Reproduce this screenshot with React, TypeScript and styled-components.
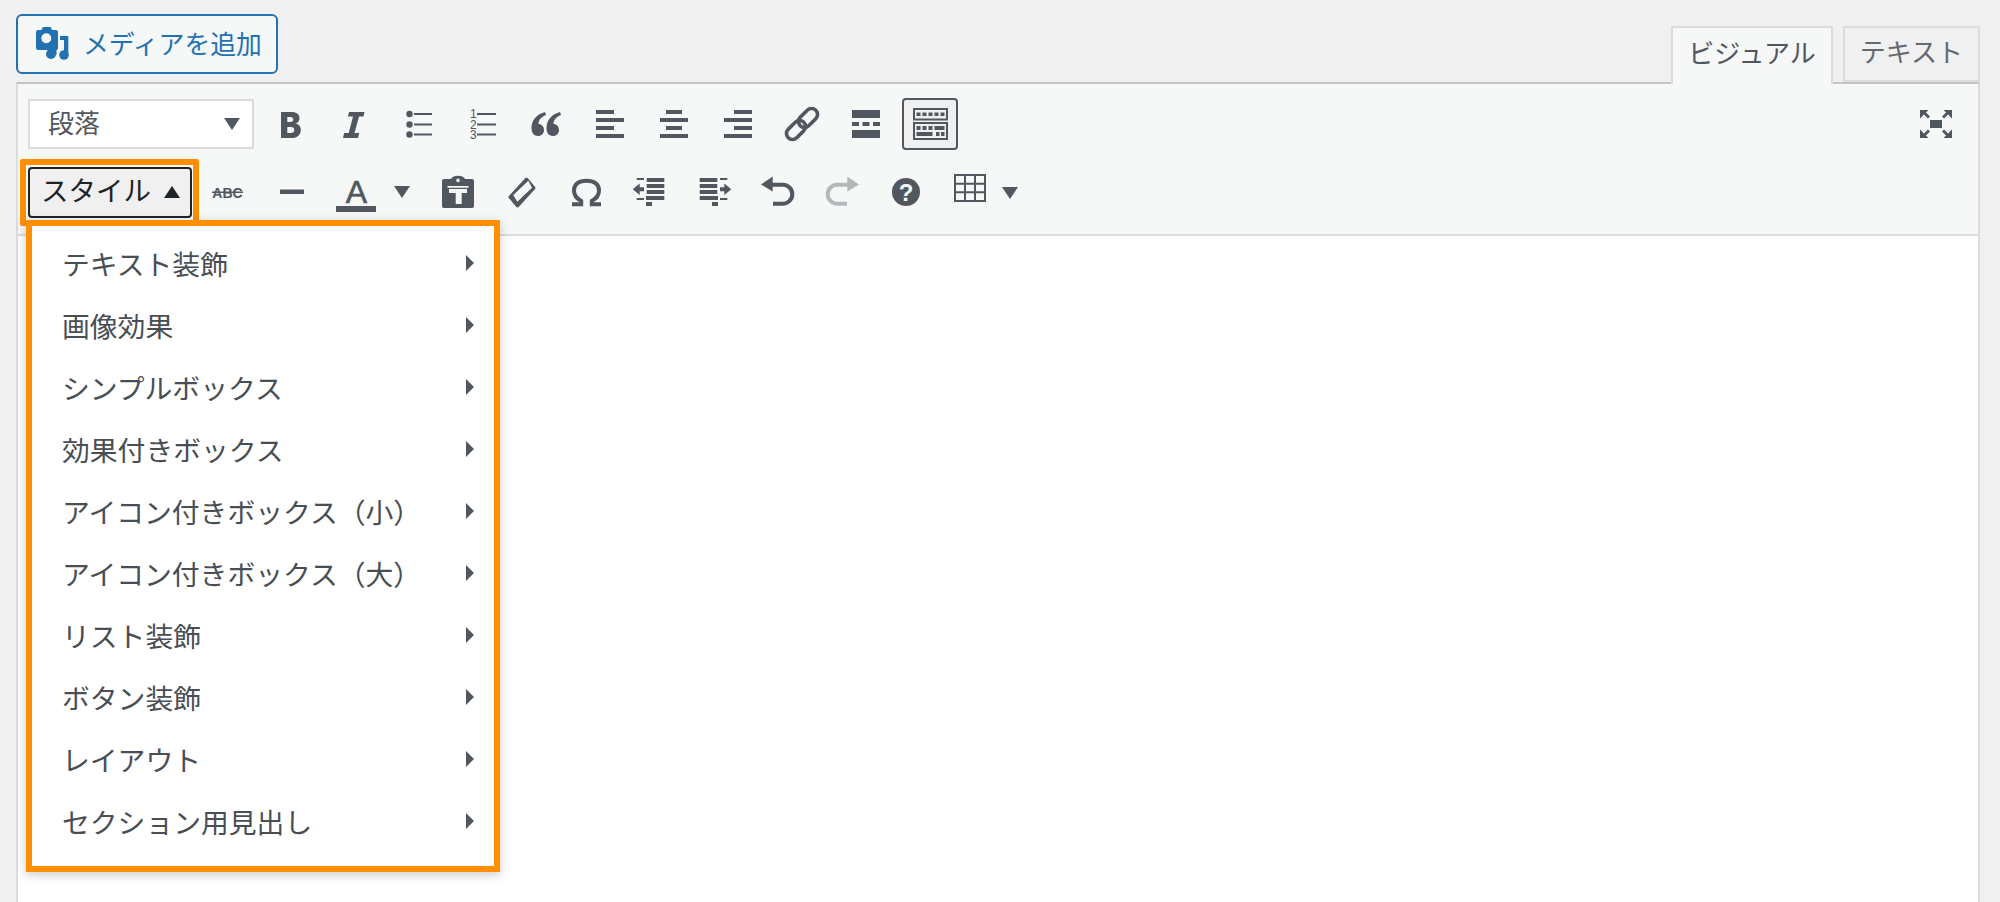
import React from 'react';
import styled, { createGlobalStyle } from 'styled-components';

const Global = createGlobalStyle`
  html, body { margin: 0; padding: 0; height: 100%; overflow: hidden; background: #f0f0f1; }
  #root { height: 100%; }
  * { box-sizing: border-box; }
`;

const FONT = `"Noto Sans CJK JP", "Noto Sans", sans-serif`;

const Page = styled.div`
  height: 902px;
  padding: 14px 20px 0 16px;
  display: flex;
  flex-direction: column;
  font-family: ${FONT};
  color: #50575e;
  overflow: hidden;
`;

const Header = styled.div`
  display: flex;
  justify-content: space-between;
  height: 68px;
  flex-shrink: 0;
`;

const MediaButton = styled.button`
  width: 262px;
  height: 60px;
  padding: 0 0 2px 18px;
  display: flex;
  align-items: center;
  gap: 15px;
  background: #f6f7f7;
  border: 2px solid #2271b1;
  border-radius: 6px;
  color: #2271b1;
  font: 400 25.8px/1 ${FONT};
`;

const Tabs = styled.div`
  display: flex;
  align-items: flex-start;
  gap: 10px;
  margin-top: 12px;
`;

const Tab = styled.div<{ $active?: boolean }>`
  height: ${(p) => (p.$active ? '58px' : '56px')};
  padding: 0 15px ${(p) => (p.$active ? '9px' : '7px')};
  display: flex;
  align-items: center;
  position: relative;
  z-index: 1;
  border: 2px solid #dcdcde;
  border-bottom: ${(p) => (p.$active ? 'none' : '2px solid #dcdcde')};
  background: ${(p) => (p.$active ? '#f6f7f7' : '#f0f0f1')};
  color: ${(p) => (p.$active ? '#50575e' : '#646970')};
  font-size: 26px;
  line-height: 1;
`;

const Editor = styled.div`
  flex: 1;
  position: relative;
  display: flex;
  flex-direction: column;
  border: 2px solid #dcdcde;
  border-top-color: #c3c4c7;
  border-bottom: none;
  background: #fff;
`;

const Toolbar = styled.div`
  height: 152px;
  flex-shrink: 0;
  padding: 14px 10px 0;
  display: flex;
  flex-direction: column;
  gap: 16px;
  background: #f6f7f7;
  border-bottom: 2px solid #dcdcde;
`;

const Row = styled.div`
  height: 52px;
  display: flex;
  align-items: center;
`;

const Select = styled.div`
  width: 226px;
  height: 50px;
  margin-right: 4px;
  padding: 0 12px 6px 18px;
  display: flex;
  align-items: center;
  justify-content: space-between;
  background: #fff;
  border: 2px solid #dcdcde;
  font-size: 26px;
  color: #50575e;
`;

const Caret = styled.span<{ $up?: boolean; $color?: string; $nudge?: number }>`
  width: 0;
  height: 0;
  flex-shrink: 0;
  border-left: 8px solid transparent;
  border-right: 8px solid transparent;
  margin-top: ${(p) => p.$nudge ?? 0}px;
  ${(p) => (p.$up ? 'border-bottom' : 'border-top')}: 12px solid ${(p) => p.$color ?? '#50575e'};
`;

const ToolButton = styled.div<{ $active?: boolean }>`
  width: 56px;
  height: 52px;
  margin: 0 4px;
  flex-shrink: 0;
  display: flex;
  align-items: center;
  justify-content: center;
  border: 2px solid ${(p) => (p.$active ? '#50575e' : 'transparent')};
  border-radius: 4px;
  background: ${(p) => (p.$active ? '#f0f0f1' : 'transparent')};
`;

const SplitArrow = styled.div`
  width: 39px;
  height: 52px;
  padding-right: 9px;
  display: flex;
  align-items: center;
  justify-content: center;
  flex-shrink: 0;
`;

const TableArrow = styled.div`
  width: 16px;
  height: 52px;
  padding-top: 2px;
  display: flex;
  align-items: center;
  justify-content: center;
  flex-shrink: 0;
`;

const Spacer = styled.div`
  flex: 1;
`;

const StyleFrame = styled.div`
  width: 179px;
  height: 67px;
  margin: 0 -4px 0 -8px;
  padding: 2px 1px 2px 2px;
  flex-shrink: 0;
  border: 6px solid #ff8f00;
  border-radius: 2px;
`;

const StyleButton = styled.div`
  width: 100%;
  height: 100%;
  padding: 0 10px 5px 11px;
  display: flex;
  align-items: center;
  justify-content: space-between;
  background: #f0f0f1;
  border: 2px solid #1d2327;
  border-radius: 4px;
  color: #1d2327;
  font-size: 27.5px;
  line-height: 1;
`;

const Menu = styled.div`
  position: absolute;
  left: 8px;
  top: 136px;
  width: 474px;
  padding: 7px 0 13px;
  background: #fff;
  border: 6px solid #ff8f00;
  box-shadow: 0 3px 10px rgba(0, 0, 0, 0.2);
  z-index: 2;
`;

const MenuItem = styled.div`
  height: 62px;
  padding: 0 20px 1px 30px;
  display: flex;
  align-items: center;
  justify-content: space-between;
  font-size: 27.8px;
  line-height: 1;
  color: #484e54;
  white-space: nowrap;
`;

const MenuArrow = styled.span`
  width: 0;
  height: 0;
  margin-bottom: 1px;
  border-top: 8px solid transparent;
  border-bottom: 8px solid transparent;
  border-left: 8px solid #50575e;
`;

const Canvas = styled.div`
  flex: 1;
  background: #fff;
`;

const Glyph = styled.svg.attrs({ viewBox: '0 0 40 40', width: 40, height: 40 })<{ $muted?: boolean }>`
  flex-shrink: 0;
  overflow: visible;
  fill: ${(p) => (p.$muted ? '#b5b8ba' : '#50575e')};
`;

const MediaGlyph = styled.svg.attrs({ viewBox: '0 0 32 32', width: 32, height: 32 })`
  flex-shrink: 0;
  overflow: visible;
  fill: #2271b1;
`;

const Digit = styled.text`
  font-family: "Liberation Sans", sans-serif;
  font-size: 12px;
  fill: #50575e;
`;

const Bold = () => (
  <Glyph>
    <path
      fillRule="evenodd"
      d="M11 8h10.500c5.300 0 8 2.400 8 6.200 0 2.600-1.400 4.500-3.800 5.300 3.200.7 5.100 3 5.100 6.200 0 5-3.400 8.300-9.300 8.300H11ZM17.300 13v5h3c2 0 3-.9 3-2.500s-1-2.500-3-2.500Zm0 10v6h3.400c2.400 0 3.600-1.100 3.600-3s-1.200-3-3.600-3Z"
    />
  </Glyph>
);
const Italic = () => (
  <Glyph>
    <path d="M15 8h15.500l-1 4.500H25L20.500 29h4.700l-1.200 5H9l1.200-5h4.500L19 12.500h-5Z" />
  </Glyph>
);
const BulletList = () => (
  <Glyph>
    <circle cx="11.500" cy="10" r="3.200" />
    <circle cx="11.500" cy="20.500" r="3.200" />
    <circle cx="11.500" cy="30.500" r="3.200" />
    <rect x="16" y="9" width="18" height="2" />
    <rect x="16" y="19.500" width="18" height="2" />
    <rect x="16" y="29.500" width="18" height="2" />
  </Glyph>
);
const NumberList = () => (
  <Glyph>
    <Digit x="8" y="14">1</Digit>
    <Digit x="8" y="24.500">2</Digit>
    <Digit x="8" y="35">3</Digit>
    <rect x="15" y="9" width="19" height="2" />
    <rect x="15" y="19.500" width="19" height="2" />
    <rect x="15" y="29.500" width="19" height="2" />
  </Glyph>
);
const QUOTE = 'c-7 2-13.500 7-13.500 16 0 5 2.500 8 6.500 8 3.500 0 6-2.500 6-6 0-3.500-2.500-6-5.500-6 0-4 2.500-7 7.500-9Z';
const Quote = () => (
  <Glyph>
    <path d={`M19 8${QUOTE}`} />
    <path d={`M34 8${QUOTE}`} />
  </Glyph>
);
const Align = ({ x, w }: { x: number; w: number }) => (
  <Glyph>
    <rect x={x} y="6" width={w} height="4" />
    <rect x="6" y="14" width="28" height="4" />
    <rect x={x} y="22" width={w} height="4" />
    <rect x="6" y="30" width="28" height="4" />
  </Glyph>
);
const LinkIcon = () => (
  <Glyph>
    <g fill="none" stroke="#50575e" strokeWidth="3.600">
      <rect x="3" y="20" width="22" height="12" rx="6" transform="rotate(-45 14 26)" />
      <rect x="15" y="8" width="22" height="12" rx="6" transform="rotate(-45 26 14)" />
    </g>
  </Glyph>
);
const MoreBreak = () => (
  <Glyph>
    <rect x="6" y="6" width="28" height="8" />
    <rect x="6" y="18" width="7" height="4" />
    <rect x="16.500" y="18" width="7" height="4" />
    <rect x="27" y="18" width="7" height="4" />
    <rect x="6" y="26" width="28" height="8" />
  </Glyph>
);
const KitchenSink = () => (
  <Glyph>
    <g fill="none" stroke="#50575e" strokeWidth="2">
      <rect x="4" y="5" width="33" height="10.500" />
      <rect x="4" y="19" width="33" height="16" />
    </g>
    {[6, 12, 18, 24, 30].map((x) => (
      <rect key={x} x={x + 0.5} y="8.500" width="4" height="3.500" />
    ))}
    {[6, 12, 18].map((x) => (
      <rect key={x} x={x + 0.5} y="22" width="4" height="4" />
    ))}
    <rect x="24.500" y="22" width="10" height="4" />
    <rect x="6.500" y="28" width="16" height="4" />
    <rect x="26" y="28" width="3.500" height="4" />
    <rect x="31" y="28" width="3.500" height="4" />
  </Glyph>
);
const CORNER = 'M4 6h8.500l-2.600 2.600 4.100 3.900-2 2-4-4L4 14.500Z';
const Fullscreen = () => (
  <Glyph>
    <rect x="14" y="16" width="12" height="8" />
    <path d={CORNER} />
    <path d={CORNER} transform="matrix(-1 0 0 1 40 0)" />
    <path d={CORNER} transform="matrix(1 0 0 -1 0 40)" />
    <path d={CORNER} transform="matrix(-1 0 0 -1 40 40)" />
  </Glyph>
);
const Strike = () => (
  <Glyph>
    <text x="20.500" y="25.500" textAnchor="middle" fontFamily="Liberation Sans, sans-serif" fontWeight="700" fontSize="14" fill="#50575e">ABC</text>
    <rect x="5" y="19.500" width="31" height="1.500" />
  </Glyph>
);
const HLine = () => (
  <Glyph>
    <rect x="9" y="17.500" width="24" height="4.500" />
  </Glyph>
);
const TextColor = () => (
  <Glyph>
    <text x="21.500" y="30.500" textAnchor="middle" fontFamily="Liberation Sans, sans-serif" fontSize="32" fill="#50575e" stroke="#50575e" strokeWidth="0.6">A</text>
    <rect x="1" y="34" width="40" height="6" />
  </Glyph>
);
const Paste = () => (
  <Glyph>
    <path
      fillRule="evenodd"
      d="M6 7h7c.6-2 3-3.300 7-3.300s6.400 1.300 7 3.300h7a2 2 0 0 1 2 2v25a2 2 0 0 1-2 2H6a2 2 0 0 1-2-2V9a2 2 0 0 1 2-2Zm14-.4a1.800 1.800 0 1 0 0 3.600 1.800 1.800 0 0 0 0-3.600ZM9.500 14v1.700h21V14ZM11 17v4h6.700v11h6V21H29v-4Z"
    />
  </Glyph>
);
const Eraser = () => (
  <Glyph>
    <path d="M24.500 7 32 16 15.500 34 8 25Z" stroke="#50575e" strokeWidth="3" strokeLinejoin="round" />
    <path d="M11.300 23 26.300 8.700 30 15.700 15.300 29.700Z" fill="#f6f7f7" />
  </Glyph>
);
const Omega = () => (
  <Glyph>
    <path
      d="M6 32.200H15.200V29C10.500 26.500 8 22.800 8 18.500 8 12 13 8.800 20.500 8.800S33 12 33 18.500c0 4.300-2.500 8-7.200 10.500v3.200H35"
      fill="none"
      stroke="#50575e"
      strokeWidth="4"
    />
  </Glyph>
);
const IndentShapes = () => (
  <>
    <rect x="6.700" y="6" width="7.300" height="2" />
    <rect x="16.700" y="6" width="17.600" height="4" />
    <rect x="16.700" y="12" width="17.600" height="4" />
    <path d="M2.700 17.300l7-5.800v3.800H14v4H9.700v3.800Z" />
    <rect x="16.700" y="18" width="17.600" height="4" />
    <rect x="6.700" y="26" width="7.300" height="2" />
    <rect x="16" y="24" width="18.300" height="4" />
    <rect x="16" y="30" width="6" height="4" />
  </>
);
const Outdent = () => (
  <Glyph>
    <IndentShapes />
  </Glyph>
);
const Indent = () => (
  <Glyph>
    <g transform="matrix(-1 0 0 1 40 0)">
      <IndentShapes />
    </g>
  </Glyph>
);
const Undo = () => (
  <Glyph>
    <path d="M3 12.500l11.700-8v15Z" />
    <path d="M14 12.700h10.800a9.500 9.500 0 0 1 0 19H15" fill="none" stroke="#50575e" strokeWidth="4" />
  </Glyph>
);
const Redo = () => (
  <Glyph $muted>
    <g transform="matrix(-1 0 0 1 40 0)">
      <path d="M3 12.500l11.700-8v15Z" />
      <path d="M14 12.700h10.800a9.500 9.500 0 0 1 0 19H15" fill="none" stroke="#b5b8ba" strokeWidth="4" />
    </g>
  </Glyph>
);
const Help = () => (
  <Glyph>
    <circle cx="20" cy="20" r="14" />
    <text x="20" y="28.500" textAnchor="middle" fontFamily="Liberation Sans, sans-serif" fontWeight="700" fontSize="24" fill="#f6f7f7">?</text>
  </Glyph>
);
const TableIcon = () => (
  <Glyph>
    <g fill="none" stroke="#50575e" strokeWidth="2">
      <rect x="5" y="3" width="30" height="26" />
      <path d="M15 3v26M25 3v26M5 11.700h30M5 20.300h30" />
    </g>
  </Glyph>
);
const MediaIcon = () => (
  <MediaGlyph>
    <path
      fillRule="evenodd"
      d="M2 3h3.300L7 0h7.500l1.700 3H20a2 2 0 0 1 2 2v16a2 2 0 0 1-2 2H2a2 2 0 0 1-2-2V5a2 2 0 0 1 2-2Zm8.300 3.300a5 5 0 1 0 0 10 5 5 0 0 0 0-10Z"
    />
    <rect x="18" y="22" width="2.500" height="6" />
    <circle cx="15" cy="27" r="5" />
    <path d="M24 9h8.300v19h-4.300V13h-4Z" />
    <circle cx="28" cy="28" r="4.800" />
  </MediaGlyph>
);

const items = [
  'テキスト装飾',
  '画像効果',
  'シンプルボックス',
  '効果付きボックス',
  'アイコン付きボックス（小）',
  'アイコン付きボックス（大）',
  'リスト装飾',
  'ボタン装飾',
  'レイアウト',
  'セクション用見出し',
];

export default function App() {
  return (
    <>
      <Global />
      <Page>
        <Header>
          <MediaButton>
            <MediaIcon />
            メディアを追加
          </MediaButton>
          <Tabs>
            <Tab $active>ビジュアル</Tab>
            <Tab>テキスト</Tab>
          </Tabs>
        </Header>
        <Editor>
          <Toolbar>
            <Row>
              <Select>
                段落
                <Caret $nudge={6} />
              </Select>
              <ToolButton><Bold /></ToolButton>
              <ToolButton><Italic /></ToolButton>
              <ToolButton><BulletList /></ToolButton>
              <ToolButton><NumberList /></ToolButton>
              <ToolButton><Quote /></ToolButton>
              <ToolButton><Align x={6} w={18} /></ToolButton>
              <ToolButton><Align x={12} w={16} /></ToolButton>
              <ToolButton><Align x={16} w={18} /></ToolButton>
              <ToolButton><LinkIcon /></ToolButton>
              <ToolButton><MoreBreak /></ToolButton>
              <ToolButton $active><KitchenSink /></ToolButton>
              <Spacer />
              <ToolButton><Fullscreen /></ToolButton>
            </Row>
            <Row>
              <StyleFrame>
                <StyleButton>
                  スタイル
                  <Caret $up $color="#1d2327" $nudge={5} />
                </StyleButton>
              </StyleFrame>
              <ToolButton><Strike /></ToolButton>
              <ToolButton><HLine /></ToolButton>
              <ToolButton><TextColor /></ToolButton>
              <SplitArrow><Caret /></SplitArrow>
              <ToolButton><Paste /></ToolButton>
              <ToolButton><Eraser /></ToolButton>
              <ToolButton><Omega /></ToolButton>
              <ToolButton><Outdent /></ToolButton>
              <ToolButton><Indent /></ToolButton>
              <ToolButton><Undo /></ToolButton>
              <ToolButton><Redo /></ToolButton>
              <ToolButton><Help /></ToolButton>
              <ToolButton><TableIcon /></ToolButton>
              <TableArrow><Caret /></TableArrow>
            </Row>
          </Toolbar>
          <Canvas />
          <Menu>
            {items.map((label) => (
              <MenuItem key={label}>
                {label}
                <MenuArrow />
              </MenuItem>
            ))}
          </Menu>
        </Editor>
      </Page>
    </>
  );
}
